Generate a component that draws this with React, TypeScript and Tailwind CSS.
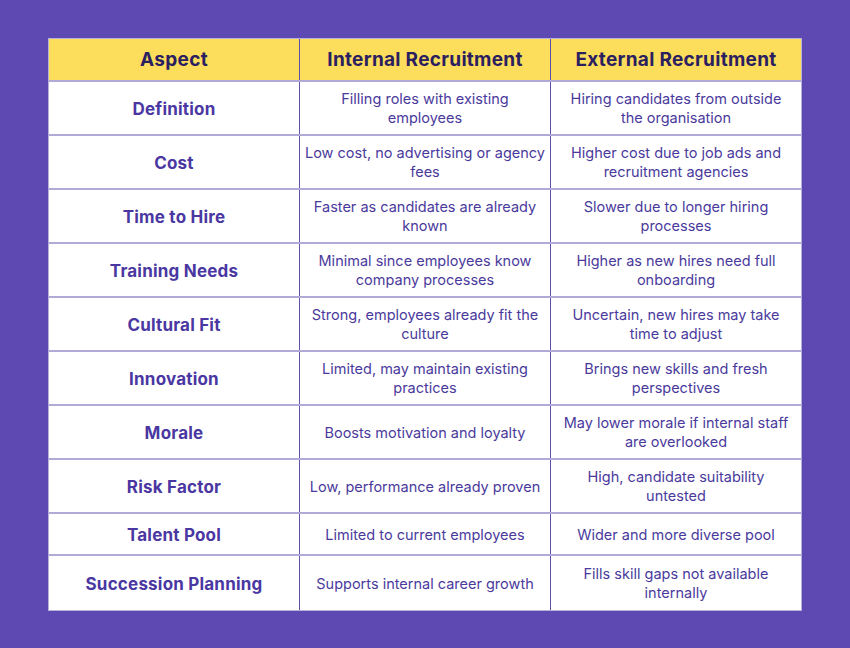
import React from 'react';

interface Row {
  aspect: string;
  internal: string[];
  external: string[];
}

// строки разбиты вручную, как на макете
const rows: Row[] = [
  { aspect: 'Definition', internal: ['Filling roles with existing', 'employees'], external: ['Hiring candidates from outside', 'the organisation'] },
  { aspect: 'Cost', internal: ['Low cost, no advertising or agency', 'fees'], external: ['Higher cost due to job ads and', 'recruitment agencies'] },
  { aspect: 'Time to Hire', internal: ['Faster as candidates are already', 'known'], external: ['Slower due to longer hiring', 'processes'] },
  { aspect: 'Training Needs', internal: ['Minimal since employees know', 'company processes'], external: ['Higher as new hires need full', 'onboarding'] },
  { aspect: 'Cultural Fit', internal: ['Strong, employees already fit the', 'culture'], external: ['Uncertain, new hires may take', 'time to adjust'] },
  { aspect: 'Innovation', internal: ['Limited, may maintain existing', 'practices'], external: ['Brings new skills and fresh', 'perspectives'] },
  { aspect: 'Morale', internal: ['Boosts motivation and loyalty'], external: ['May lower morale if internal staff', 'are overlooked'] },
  { aspect: 'Risk Factor', internal: ['Low, performance already proven'], external: ['High, candidate suitability', 'untested'] },
  { aspect: 'Talent Pool', internal: ['Limited to current employees'], external: ['Wider and more diverse pool'] },
  { aspect: 'Succession Planning', internal: ['Supports internal career growth'], external: ['Fills skill gaps not available', 'internally'] },
];

const Cell: React.FC<{ lines: string[] }> = ({ lines }) => (
  <div className="flex flex-col items-center justify-center text-center text-[14.5px] leading-[19px] text-[#4a3a9c] border-l border-[#5e4fa8]">
    {lines.map((l) => (
      <span key={l} className="whitespace-nowrap">
        {l}
      </span>
    ))}
  </div>
);

export default function App() {
  return (
    <div
      className="w-[850px] h-[648px] bg-[#5e48b2] pt-[38px] pl-[48px]"
      style={{ fontFamily: 'Inter, "Open Sans", sans-serif' }}
    >
      <div className="w-[754px] bg-white border border-[#b7b0da]">
        {/* шапка */}
        <div className="grid grid-cols-[250px_251px_1fr] h-[43px] bg-[#fddd5c] border-b-2 border-[#b1a9d6]">
          {['Aspect', 'Internal Recruitment', 'External Recruitment'].map((h, i) => (
            <div
              key={h}
              className={`flex items-center justify-center pt-[1px] text-[19px] font-bold text-[#2a2060] tracking-[0.3px] ${i > 0 ? 'border-l border-[#5e4fa8]' : ''}`}
            >
              {h}
            </div>
          ))}
        </div>

        {rows.map((r, idx) => {
          const short = r.aspect === 'Talent Pool';
          return (
            <div
              key={r.aspect}
              className={`grid grid-cols-[250px_251px_1fr] ${short ? 'h-[42px]' : 'h-[54px]'} ${idx < rows.length - 1 ? 'border-b-2 border-[#b1a9d6]' : ''}`}
            >
              <div className="flex items-center justify-center pt-[3px] text-[17px] font-bold tracking-[0.2px] text-[#4a37a2]">
                {r.aspect}
              </div>
              <Cell lines={r.internal} />
              <Cell lines={r.external} />
            </div>
          );
        })}
      </div>
    </div>
  );
}
